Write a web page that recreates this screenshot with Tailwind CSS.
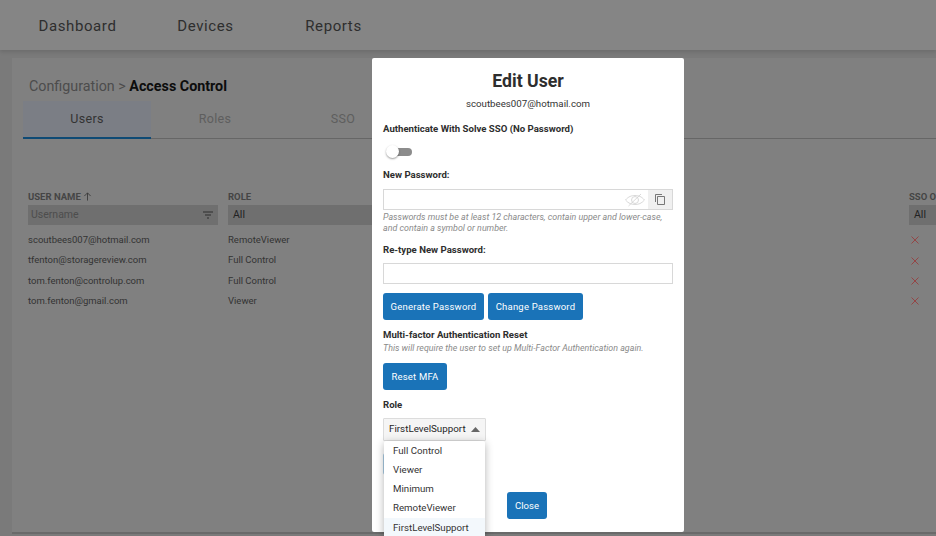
<!DOCTYPE html>
<html>
<head>
<meta charset="utf-8">
<script src="https://cdn.jsdelivr.net/npm/@tailwindcss/browser@4"></script>
</head>
<body class="m-0 overflow-hidden">
<div class="relative w-[936px] h-[536px] overflow-hidden bg-[#7a7a7a] font-['Roboto',sans-serif]">
  <nav class="h-[50px] bg-[#858585] flex items-center pl-[13.5px] pt-[3px] text-[15px] tracking-[0.6px] text-[#2e2e2e] shadow-[0_2px_4px_rgba(0,0,0,0.12)]">
    <div class="w-[128px] text-center">Dashboard</div>
    <div class="w-[128px] text-center">Devices</div>
    <div class="w-[128px] text-center">Reports</div>
  </nav>
  <main class="ml-[12px] mt-[8px] h-[476px] bg-[#808080] border-b-2 border-[#6a6a6a]">
    <h1 class="pl-[17px] pt-[19px] text-[14.3px] leading-[18px] text-[#4c4c4c]">Configuration &gt; <span class="font-bold text-[#0d0d0d]">Access Control</span></h1>
    <div class="ml-[11px] mt-[5px] flex border-b border-[#666] text-[12.5px] tracking-[0.3px] h-[39px] pt-[1px]">
      <div class="w-[128px] flex items-center justify-center bg-[#7b7e85] border-b-2 border-[#0e4a75] text-[#333] -mb-px">Users</div>
      <div class="w-[128px] flex items-center justify-center text-[#5e5e5e]">Roles</div>
      <div class="w-[128px] flex items-center justify-center text-[#5e5e5e]">SSO</div>
    </div>
    <div class="ml-[16px] mt-[51px] grid grid-cols-[200px_681px_27px] text-[9.5px] text-[#333]">
      <div class="h-[15px] text-[#454545] font-bold text-[9.5px] leading-[14px] flex items-start gap-[2px]">USER NAME
        <svg class="w-[9px] h-[9px] mt-[2px]" viewBox="0 0 10 10" fill="none" stroke="#3a3a3a" stroke-width="1"><path d="M5 9.500V1M1.500 4.500 5 1l3.500 3.500"/></svg>
      </div>
      <div class="h-[15px] text-[#454545] font-bold leading-[14px]">ROLE</div>
      <div class="h-[15px] text-[#454545] font-bold leading-[14px] whitespace-nowrap">SSO O</div>

      <div class="mr-[10px] h-[20px] bg-[#6f6f6f] flex items-center justify-between pl-[3px] pr-[5px] text-[10.500px] text-[#4d4d4d]">Username
        <svg class="w-[10px] h-[8px]" viewBox="0 0 10 8" fill="none" stroke="#2e2e2e" stroke-width="1"><path d="M0 1h10M2 4h6M4 7h2"/></svg>
      </div>
      <div class="mr-[400px] h-[20px] bg-[#6f6f6f] flex items-center pl-[5px] text-[10.500px] text-[#222]">All</div>
      <div class="h-[20px] bg-[#6f6f6f] flex items-center pl-[5px] text-[10.500px] text-[#222]">All</div>

      <div class="h-[20.4px] mt-[5px] flex items-center">scoutbees007@hotmail.com</div>
      <div class="h-[20.4px] mt-[5px] flex items-center">RemoteViewer</div>
      <div class="h-[20.4px] mt-[5px] flex items-center pl-[2px]"><svg class="w-[8px] h-[8px]" viewBox="0 0 8 8" stroke="#944545" stroke-width="1"><path d="m.5.5 7 7M7.500.5l-7 7"/></svg></div>

      <div class="h-[20.4px] flex items-center">tfenton@storagereview.com</div>
      <div class="h-[20.4px] flex items-center">Full Control</div>
      <div class="h-[20.4px] flex items-center pl-[2px]"><svg class="w-[8px] h-[8px]" viewBox="0 0 8 8" stroke="#944545" stroke-width="1"><path d="m.5.5 7 7M7.500.5l-7 7"/></svg></div>

      <div class="h-[20.4px] flex items-center">tom.fenton@controlup.com</div>
      <div class="h-[20.4px] flex items-center">Full Control</div>
      <div class="h-[20.4px] flex items-center pl-[2px]"><svg class="w-[8px] h-[8px]" viewBox="0 0 8 8" stroke="#944545" stroke-width="1"><path d="m.5.5 7 7M7.500.5l-7 7"/></svg></div>

      <div class="h-[20.4px] flex items-center">tom.fenton@gmail.com</div>
      <div class="h-[20.4px] flex items-center">Viewer</div>
      <div class="h-[20.4px] flex items-center pl-[2px]"><svg class="w-[8px] h-[8px]" viewBox="0 0 8 8" stroke="#944545" stroke-width="1"><path d="m.5.5 7 7M7.500.5l-7 7"/></svg></div>
    </div>
  </main>

  <!-- modal -->
  <section class="absolute left-[372px] top-[58px] w-[312px] h-[474px] bg-white rounded-[2px] px-[11px] text-[#262626]">
    <h2 class="text-center text-[17.7px] leading-[22px] font-bold text-[#2e2e2e] mt-[12px]">Edit User</h2>
    <p class="text-center text-[9.700px] leading-[14px] mt-[5px] text-[#333]">scoutbees007@hotmail.com</p>
    <div class="font-bold text-[9.600px] leading-[12px] mt-[12px] text-[#2e2e2e]">Authenticate With Solve SSO (No Password)</div>
    <div class="relative w-[28px] h-[14px] mt-[10px] ml-[3px]">
      <div class="absolute left-[4px] top-[3px] w-[22px] h-[8px] rounded-full bg-[#8c8c8c]"></div>
      <div class="absolute left-0 top-0 w-[13px] h-[13px] rounded-full bg-white shadow-[0_1px_2px_rgba(0,0,0,0.4)]"></div>
    </div>
    <div class="font-bold text-[9.600px] leading-[12px] mt-[10px] text-[#2e2e2e]">New Password:</div>
    <div class="mt-[8px] h-[21px] border border-[#d8d8d8] flex items-center justify-end">
      <svg class="w-[20px] h-[14px] mr-[3px]" viewBox="0 0 20 14" fill="none" stroke="#cfcfcf" stroke-width="0.8"><path d="M.5 7c3-3.500 6-4.500 9.500-4.500s6.500 1 9.500 4.500c-3 3.500-6 4.500-9.500 4.500S3.500 10.500.5 7Z"/><circle cx="10" cy="7" r="3.500"/><path d="M3.500 13 16 1"/></svg>
      <div class="w-[24px] h-[19px] bg-[#f0f0f0] flex items-center justify-center">
        <svg class="w-[10px] h-[11px]" viewBox="0 0 10 11" fill="none" stroke="#6a6a6a" stroke-width="0.9"><path d="M.5 8V.5H7"/><path d="M2.500 2.500h7v8h-7z"/></svg>
      </div>
    </div>
    <p class="italic text-[8.900px] leading-[11px] text-[#8a8a8a] mt-[2px] whitespace-nowrap">Passwords must be at least 12 characters, contain upper and lower-case,<br>and contain a symbol or number.</p>
    <div class="font-bold text-[9.600px] leading-[12px] mt-[10px] text-[#2e2e2e]">Re-type New Password:</div>
    <div class="mt-[7px] h-[21px] border border-[#d8d8d8]"></div>
    <div class="flex gap-[4px] mt-[9px]">
      <button class="h-[27px] w-[101px] pt-[1px] bg-[#1a73b8] rounded-[3px] text-white text-[9.500px] tracking-[0.2px]">Generate Password</button>
      <button class="h-[27px] w-[95px] pt-[1px] bg-[#1a73b8] rounded-[3px] text-white text-[9.500px] tracking-[0.2px]">Change Password</button>
    </div>
    <div class="font-bold text-[9.600px] leading-[12px] mt-[9px] text-[#2e2e2e]">Multi-factor Authentication Reset</div>
    <p class="italic text-[8.900px] leading-[11px] text-[#8a8a8a] mt-[2px]">This will require the user to set up Multi-Factor Authentication again.</p>
    <button class="block h-[27px] w-[64px] pt-[1px] bg-[#1a73b8] rounded-[3px] text-white text-[9.500px] tracking-[0.2px] mt-[9px]">Reset MFA</button>
    <div class="font-bold text-[9.600px] leading-[12px] mt-[9px] text-[#2e2e2e]">Role</div>
    <div class="mt-[7px] h-[23px] w-[103px] border border-[#dcdcdc] bg-[#f5f5f5] rounded-[1px] flex items-center justify-between pl-[5px] pr-[5px] text-[9.800px]">FirstLevelSupport
      <svg class="w-[9px] h-[5px]" viewBox="0 0 9 5" fill="#666"><path d="M4.500 0 9 5H0z"/></svg>
    </div>
    <div class="mt-[12px] h-[22px] w-[40px] bg-[#a9cbe4] rounded-[3px]"></div>
    <div class="flex justify-center mt-[17px] pr-[2px]">
      <button class="h-[27px] w-[40px] pt-[1px] bg-[#1a73b8] rounded-[3px] text-white text-[9.500px]">Close</button>
    </div>
  </section>

  <!-- role menu -->
  <ul class="absolute left-[384px] top-[441px] w-[101px] h-[100px] pt-[1px] bg-white rounded-[2px] shadow-[0_2px_8px_rgba(0,0,0,0.3)] text-[9.700px] text-[#333]">
    <li class="h-[19px] pl-[9px] flex items-center">Full Control</li>
    <li class="h-[19px] pl-[9px] flex items-center">Viewer</li>
    <li class="h-[19px] pl-[9px] flex items-center">Minimum</li>
    <li class="h-[19px] pl-[9px] flex items-center">RemoteViewer</li>
    <li class="h-[24px] pl-[9px] pb-[3px] flex items-center bg-[#f3f8fc]">FirstLevelSupport</li>
  </ul>
</div>
</body>
</html>
